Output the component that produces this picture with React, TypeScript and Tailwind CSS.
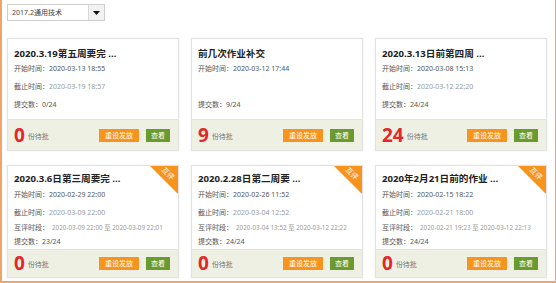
import React from "react";

type Card = {
  title: string;
  start: string;
  end?: string;
  peer?: [string, string];
  submit: string;
  pending: string;
};

const row1: Card[] = [
  { title: "2020.3.19第五周要完 ...", start: "2020-03-13 18:55", end: "2020-03-19 18:57", submit: "0/24", pending: "0" },
  { title: "前几次作业补交", start: "2020-03-12 17:44", submit: "9/24", pending: "9" },
  { title: "2020.3.13日前第四周 ...", start: "2020-03-08 15:13", end: "2020-03-12 22:20", submit: "24/24", pending: "24" },
];

const row2: Card[] = [
  { title: "2020.3.6日第三周要完 ...", start: "2020-02-29 22:00", end: "2020-03-09 22:00", peer: ["2020-03-09 22:00", "2020-03-09 22:01"], submit: "23/24", pending: "0" },
  { title: "2020.2.28日第二周要 ...", start: "2020-02-26 11:52", end: "2020-03-04 12:52", peer: ["2020-03-04 13:52", "2020-03-12 22:22"], submit: "24/24", pending: "0" },
  { title: "2020年2月21日前的作业 ...", start: "2020-02-15 18:22", end: "2020-02-21 18:00", peer: ["2020-02-21 19:23", "2020-03-12 22:13"], submit: "24/24", pending: "0" },
];

function Footer({ pending }: { pending: string }) {
  return (
    <div className="h-[31px] bg-[#eef0e3] border-t border-[#e3e6d6] flex items-center pl-[6px] pr-[8px]">
      <span className="text-[19px] leading-none font-bold text-[#e3262b]">{pending}</span>
      <span className="ml-[3px] mt-[4px] text-[7px] text-[#777]">份待批</span>
      <div className="ml-auto flex items-center gap-[7px]">
        <div className="w-[40px] h-[13px] bg-[#f7941f] text-white text-[7px] leading-[13px] text-center">重设发放</div>
        <div className="w-[24px] h-[13px] bg-[#6a9a2e] text-white text-[7px] leading-[13px] text-center">查看</div>
      </div>
    </div>
  );
}

function Line({ label, children, cls }: { label: string; children?: React.ReactNode; cls: string }) {
  return (
    <div className={`h-[14px] leading-[14px] text-[7px] text-[#555] whitespace-nowrap ${cls}`}>
      {label}
      {children}
    </div>
  );
}

function Card1({ c }: { c: Card }) {
  return (
    <div className="w-[172px] h-[113px] bg-white border border-[#e2e2e2] shadow-[0_0_2px_rgba(0,0,0,0.08)] flex flex-col">
      <div className="flex-1 pl-[6px] pt-[8px]">
        <div className="h-[14px] leading-[14px] text-[9.6px] font-bold text-[#222] whitespace-nowrap">{c.title}</div>
        <Line label="开始时间：" cls="mt-[1px]">{c.start}</Line>
        {c.end ? (
          <Line label="截止时间：" cls="mt-[4px]"><span className="text-[#9a9a9a]">{c.end}</span></Line>
        ) : (
          <div className="h-[14px] mt-[4px]" />
        )}
        <Line label="提交数：" cls="mt-[4px]">{c.submit}</Line>
      </div>
      <Footer pending={c.pending} />
    </div>
  );
}

function Card2({ c }: { c: Card }) {
  return (
    <div className="relative overflow-hidden w-[172px] h-[113px] bg-white border border-[#e2e2e2] shadow-[0_0_2px_rgba(0,0,0,0.08)] flex flex-col">
      <div className="absolute top-0 right-0 w-[28px] h-[28px]">
        <svg width="28" height="28" viewBox="0 0 28 28" className="absolute top-0 left-0">
          <polygon points="0,0 28,0 28,28" fill="#f7941d" />
        </svg>
        <span className="absolute top-[4px] right-[3px] text-[7px] leading-none text-white rotate-45">互评</span>
      </div>
      <div className="flex-1 pl-[6px] pt-[6px]">
        <div className="h-[14px] leading-[14px] text-[9.6px] font-bold text-[#222] whitespace-nowrap">{c.title}</div>
        <Line label="开始时间：" cls="mt-[2px]">{c.start}</Line>
        <Line label="截止时间：" cls="mt-[4px]"><span className="text-[#9a9a9a]">{c.end}</span></Line>
        <Line label="互评时段：" cls="mt-[1px]">
          <span className="text-[#9a9a9a] ml-[3px] text-[6.3px]">{c.peer![0]} 至 {c.peer![1]}</span>
        </Line>
        <Line label="提交数：" cls="">{c.submit}</Line>
      </div>
      <Footer pending={c.pending} />
    </div>
  );
}

export default function App() {
  return (
    <div
      className="w-[556px] h-[283px] bg-white border-l-2 border-r border-b-2 border-[#f0a468] overflow-hidden"
      style={{ fontFamily: '"Noto Sans", "Noto Sans CJK SC", sans-serif' }}
    >
      <div className="pl-[5px] pt-[4px]">
        <div className="w-[98px] h-[17px] border border-[#cfcfcf] flex bg-white">
          <div className="flex-1 text-[7px] leading-[15px] pl-[4px] text-[#444] whitespace-nowrap">2017.2通用技术</div>
          <div className="w-[16px] border-l border-[#d8d8d8] bg-[#f2f2f2] flex items-center justify-center">
            <svg width="7" height="4" viewBox="0 0 7 4"><polygon points="0,0 7,0 3.5,4" fill="#111" /></svg>
          </div>
        </div>
        <div className="mt-[17px] flex gap-[12px]">
          {row1.map((c, i) => <Card1 key={i} c={c} />)}
        </div>
        <div className="mt-[14px] flex gap-[12px]">
          {row2.map((c, i) => <Card2 key={i} c={c} />)}
        </div>
      </div>
    </div>
  );
}
